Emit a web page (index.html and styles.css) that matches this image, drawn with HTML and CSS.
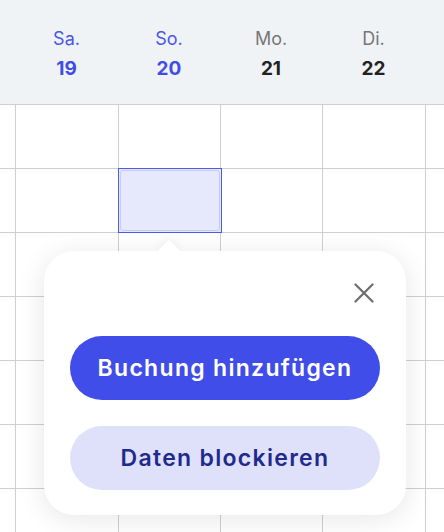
FILE: index.html
```html
<!DOCTYPE html>
<html lang="de">
<head>
<meta charset="utf-8">
<title>Kalender</title>
<link rel="stylesheet" href="styles.css">
</head>
<body>
<div class="page">
  <div class="header cols">
    <div class="hcell"></div>
    <div class="hcell weekend"><span class="dname">Sa.</span><span class="dnum">19</span></div>
    <div class="hcell weekend"><span class="dname">So.</span><span class="dnum">20</span></div>
    <div class="hcell"><span class="dname">Mo.</span><span class="dnum">21</span></div>
    <div class="hcell"><span class="dname">Di.</span><span class="dnum">22</span></div>
    <div class="hcell"></div>
  </div>
  <div class="grid">
    <div class="row cols"><div class="cell first"></div><div class="cell"></div><div class="cell"></div><div class="cell"></div><div class="cell"></div><div class="cell"></div></div>
    <div class="row cols"><div class="cell first"></div><div class="cell"></div><div class="cell"><div class="selection"></div></div><div class="cell"></div><div class="cell"></div><div class="cell"></div></div>
    <div class="row cols"><div class="cell first"></div><div class="cell"></div><div class="cell"></div><div class="cell"></div><div class="cell"></div><div class="cell"></div></div>
    <div class="row cols"><div class="cell first"></div><div class="cell"></div><div class="cell"></div><div class="cell"></div><div class="cell"></div><div class="cell"></div></div>
    <div class="row cols"><div class="cell first"></div><div class="cell"></div><div class="cell"></div><div class="cell"></div><div class="cell"></div><div class="cell"></div></div>
    <div class="row cols"><div class="cell first"></div><div class="cell"></div><div class="cell"></div><div class="cell"></div><div class="cell"></div><div class="cell"></div></div>
    <div class="row cols"><div class="cell first"></div><div class="cell"></div><div class="cell"></div><div class="cell"></div><div class="cell"></div><div class="cell"></div></div>
  </div>

  <div class="popover">
    <div class="arrow"></div>
    <button class="close" aria-label="Schließen">
      <svg width="20" height="20" viewBox="0 0 20 20"><path d="M1.5 1.5 L18.5 18.5 M18.5 1.5 L1.5 18.5" stroke="#6d6d6d" stroke-width="2.2" stroke-linecap="round" fill="none"/></svg>
    </button>
    <button class="btn primary">Buchung hinzufügen</button>
    <button class="btn secondary">Daten blockieren</button>
  </div>
</div>
</body>
</html>
```
FILE: styles.css
```css
* { box-sizing: border-box; }
html, body { margin: 0; padding: 0; }
body {
  font-family: Inter, "Noto Sans", "Liberation Sans", sans-serif;
  background: #ffffff;
}
.page {
  position: relative;
  width: 444px;
  height: 532px;
  overflow: hidden;
}
.cols {
  display: grid;
  grid-template-columns: 15px 103px 102px 102px 103px 19px;
}
.header {
  height: 104px;
  background: #f0f3f5;
}
.hcell {
  display: flex;
  flex-direction: column;
  align-items: center;
  padding-top: 27px;
}
.dname {
  font-size: 18px;
  line-height: 24px;
  color: #777777;
  font-weight: 400;
}
.dnum {
  margin-top: 6px;
  font-size: 19px;
  line-height: 24px;
  font-weight: 700;
  color: #222222;
}
.weekend .dname { color: #4b56e8; }
.weekend .dnum { color: #3f4ce6; }
.row {
  height: 64px;
}
.cell {
  position: relative;
  border-top: 1px solid #cfcfcf;
  border-left: 1px solid #cfcfcf;
}
.cell.first { border-left: none; }
.selection {
  position: absolute;
  z-index: 1;
  left: -1.5px;
  top: -1px;
  width: 104px;
  height: 65px;
  border: 1px solid #4d5ae6;
  background: #e6e8fc;
}
.selection::after {
  content: "";
  position: absolute;
  inset: 1px;
  border: 1.5px solid #c5cbf7;
  border-radius: 3px;
}
.popover {
  position: absolute;
  z-index: 2;
  left: 44px;
  top: 251px;
  width: 362px;
  height: 264px;
  background: #ffffff;
  border-radius: 30px;
  box-shadow: 0 4px 28px rgba(0, 0, 0, 0.10);
  padding: 24px 26px 25px;
  display: flex;
  flex-direction: column;
}
.arrow {
  position: absolute;
  left: 117px;
  top: -8px;
  width: 16px;
  height: 16px;
  background: #ffffff;
  transform: rotate(45deg);
  box-shadow: -3px -3px 8px rgba(0, 0, 0, 0.04);
}
.close {
  align-self: flex-end;
  width: 24px;
  height: 24px;
  margin: 6px 4px 0 0;
  padding: 2px;
  border: none;
  background: none;
  display: flex;
  align-items: center;
  justify-content: center;
}
.btn {
  height: 64px;
  border: none;
  border-radius: 32px;
  font-family: Inter, "Noto Sans", sans-serif;
  font-size: 23px;
  font-weight: 600;
  letter-spacing: 1.3px;
}
.primary {
  margin-top: 31px;
  background: #414de8;
  color: #ffffff;
}
.secondary {
  margin-top: 26px;
  background: #dfe1fa;
  color: #1f2a8e;
}
```
